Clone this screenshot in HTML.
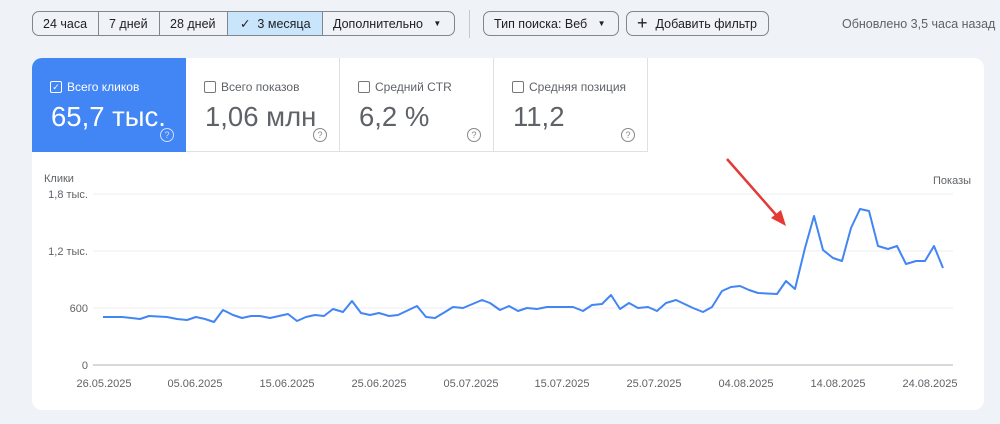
<!DOCTYPE html>
<html><head><meta charset="utf-8"><style>
body{margin:0;width:1000px;height:424px;background:#eff2f7;font-family:"Liberation Sans",sans-serif;position:relative;overflow:hidden}
.btn{position:absolute;top:11px;height:25px;border:1px solid #80868b;border-radius:7px;display:flex;font-size:12.5px;color:#202124;box-sizing:border-box;background:#eff2f7}
.seg{display:flex;align-items:center;padding:0 10px;border-right:1px solid #80868b;height:100%;box-sizing:border-box}
.seg:last-child{border-right:none}
.card{position:absolute;left:32px;top:58px;width:952px;height:352px;background:#fff;border-radius:10px;overflow:hidden}
.tile{position:absolute;top:0;width:154px;height:94px;border-right:1px solid #e0e0e0;border-bottom:1px solid #e0e0e0;box-sizing:border-box}
.lab{position:absolute;left:18px;top:22px;font-size:12px;color:#5f6368;display:flex;align-items:center}
.cb{width:10px;height:10px;border:1px solid #777;border-radius:2px;margin-right:5px}
.val{position:absolute;left:19px;top:43px;font-size:27.5px;color:#5f6368}
.q{position:absolute;right:12px;top:70px;width:12px;height:12px;border:1.3px solid #888;border-radius:50%;font-size:9px;line-height:12px;text-align:center;color:#888}
</style></head><body>
<div class="btn" style="left:32px;width:423px">
<div class="seg" style="width:66px">24 часа</div>
<div class="seg" style="width:61px">7 дней</div>
<div class="seg" style="width:68px">28 дней</div>
<div class="seg" style="width:95px;background:#c9e5fb;padding-left:12px">✓&nbsp;&nbsp;3 месяца</div>
<div class="seg" style="flex:1">Дополнительно&nbsp;&nbsp;&nbsp;<span style="font-size:8px">▼</span></div>
</div>
<div style="position:absolute;left:469px;top:10px;width:1px;height:28px;background:#c4c7cc"></div>
<div class="btn" style="left:483px;width:136px"><div class="seg">Тип поиска: Веб&nbsp;&nbsp;&nbsp;<span style="font-size:8px">▼</span></div></div>
<div class="btn" style="left:626px;width:143px"><div class="seg"><span style="font-size:18px;font-weight:300;margin-right:8px">+</span>Добавить фильтр</div></div>
<div style="position:absolute;left:842px;top:17px;font-size:12.5px;color:#5f6368">Обновлено 3,5 часа назад</div>
<div class="card">
<div class="tile" style="left:0;background:#4285f4;border:none">
<div class="lab" style="color:#fff"><div class="cb" style="border-color:#fff;font-size:9px;line-height:10px;text-align:center">✓</div>Всего кликов</div>
<div class="val" style="color:#fff">65,7 тыс.</div><div class="q" style="border-color:#cfe0fc;color:#cfe0fc">?</div></div>
<div class="tile" style="left:154px"><div class="lab"><div class="cb"></div>Всего показов</div><div class="val">1,06 млн</div><div class="q">?</div></div>
<div class="tile" style="left:308px"><div class="lab"><div class="cb"></div>Средний CTR</div><div class="val">6,2 %</div><div class="q">?</div></div>
<div class="tile" style="left:462px"><div class="lab"><div class="cb"></div>Средняя позиция</div><div class="val">11,2</div><div class="q">?</div></div>
</div>
<svg style="position:absolute;left:0;top:0" width="1000" height="424" font-family="Liberation Sans" font-size="11" fill="#5f6368">
<text x="44" y="182">Клики</text><text x="933" y="184">Показы</text>
<g stroke="#ececec"><line x1="93" y1="194" x2="953" y2="194"/><line x1="93" y1="251" x2="953" y2="251"/><line x1="93" y1="308" x2="953" y2="308"/></g>
<line x1="93" y1="365" x2="953" y2="365" stroke="#ccc" stroke-width="1.5"/>
<g text-anchor="end"><text x="88" y="198">1,8 тыс.</text><text x="88" y="255">1,2 тыс.</text><text x="88" y="312">600</text><text x="88" y="369">0</text></g>
<g text-anchor="middle"><text x="104" y="387">26.05.2025</text><text x="195" y="387">05.06.2025</text><text x="287" y="387">15.06.2025</text><text x="379" y="387">25.06.2025</text><text x="471" y="387">05.07.2025</text><text x="562" y="387">15.07.2025</text><text x="654" y="387">25.07.2025</text><text x="746" y="387">04.08.2025</text><text x="838" y="387">14.08.2025</text><text x="930" y="387">24.08.2025</text></g>
<polyline fill="none" stroke="#4285f4" stroke-width="2" stroke-linejoin="round" points="103,317 122,317 140,319 149,316 167,317 177,319 187,320 196,317 205,319 214,322 223,310 233,315 242,318 251,316 260,316 270,318 279,316 288,314 297,321 306,317 315,315 324,316 333,309 343,312 352,301 361,313 370,315 379,313 389,316 398,315 417,306 426,317 435,318 445,312 453,307 463,308 482,300 490,303 500,310 509,306 518,311 527,308 537,309 547,307 573,307 583,311 592,305 602,304 611,295 620,309 629,303 638,308 648,307 657,311 666,303 676,300 693,308 703,312 712,307 722,291 731,287 740,286 749,290 758,293 777,294 786,281 795,289 805,248 814,216 823,250 833,258 842,261 851,228 860,209 869,211 878,246 888,249 897,246 906,264 916,261 925,261 934,246 943,268"/>
<line x1="727" y1="159" x2="777" y2="216" stroke="#e53935" stroke-width="2.5"/>
<polygon points="786,226 771,218 781,210" fill="#e53935"/>
</svg>
</body></html>
